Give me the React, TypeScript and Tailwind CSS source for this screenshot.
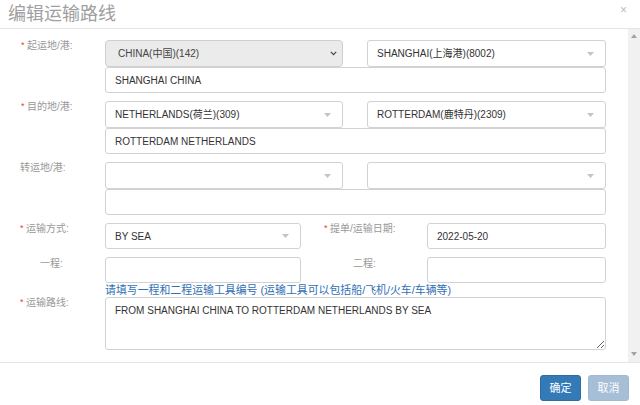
import React from "react";

function Label({ text, required, pl, w = "w-[105px]" }: { text: string; required?: boolean; pl: string; w?: string }) {
  return (
    <div className={`${w} shrink-0 ${pl} text-[10px] leading-[12px] text-[#999] whitespace-nowrap`}>
      {required ? <span className="inline-block w-[6px] text-[#e5403a] text-[9px] align-top leading-[10px]">*</span> : null}
      {text}
    </div>
  );
}

function Tri({ color = "#c4c4c4" }: { color?: string }) {
  return (
    <svg width="7" height="4" viewBox="0 0 7 4">
      <path d="M0 0 L7 0 L3.5 4 Z" fill={color} />
    </svg>
  );
}

function Select2({ value, w }: { value?: string; w: string }) {
  return (
    <div className={`${w} h-[27px] border border-[#d2d2d2] rounded-[3px] bg-white flex items-center justify-between pl-[9px] pr-[11px] text-[10px] text-[#333]`}>
      <span className="whitespace-nowrap">{value ?? ""}</span>
      <Tri />
    </div>
  );
}

function Input({ value, w, h = "h-[26px]" }: { value?: string; w: string; h?: string }) {
  return (
    <div className={`${w} ${h} border border-[#d2d2d2] rounded-[3px] bg-white flex items-center pl-[9px] text-[10px] text-[#333] whitespace-nowrap`}>
      {value ?? ""}
    </div>
  );
}

export default function App() {
  return (
    <div className="w-[640px] h-[405px] bg-white flex flex-col overflow-hidden font-['Liberation_Sans','Noto_Sans_CJK_SC',sans-serif]">
      {/* header */}
      <div className="h-[29px] shrink-0 border-b border-[#e5e5e5] flex items-start justify-between">
        <div className="pl-[8px] pt-[3px] text-[18px] leading-[22px] text-[#a0a0a0]">编辑运输路线</div>
        <div className="pr-[13px] pt-[2px] text-[12px] leading-[16px] text-[#bdbdbd]">×</div>
      </div>

      {/* body */}
      <div className="h-[334px] shrink-0 border-b border-[#e5e5e5] flex">
        <div className="w-[628px] pt-[11px] flex flex-col">
          {/* row 1 */}
          <div className="flex">
            <Label text="起运地/港:" required pl="pl-[21px]" />
            <div className="w-[501px] flex flex-col">
              <div className="flex gap-[24px]">
                <div className="w-[238px] h-[27px] border border-[#cfcfcf] rounded-[4px] bg-[#ebebeb] flex items-center justify-between pl-[12px] pr-[5px] text-[10px] text-[#444]">
                  <span>CHINA(中国)(142)</span>
                  <svg width="7" height="5" viewBox="0 0 7 5">
                    <path d="M0.8 0.8 L3.5 3.6 L6.2 0.8" stroke="#444" strokeWidth="1.2" fill="none" />
                  </svg>
                </div>
                <Select2 w="w-[239px]" value="SHANGHAI(上海港)(8002)" />
              </div>
              <Input w="w-[501px]" value="SHANGHAI CHINA" />
            </div>
          </div>

          {/* row 2 */}
          <div className="flex mt-[8px]">
            <Label text="目的地/港:" required pl="pl-[21px]" />
            <div className="w-[501px] flex flex-col">
              <div className="flex gap-[24px]">
                <Select2 w="w-[238px]" value="NETHERLANDS(荷兰)(309)" />
                <Select2 w="w-[239px]" value="ROTTERDAM(鹿特丹)(2309)" />
              </div>
              <Input w="w-[501px]" value="ROTTERDAM NETHERLANDS" />
            </div>
          </div>

          {/* row 3 */}
          <div className="flex mt-[8px]">
            <Label text="转运地/港:" pl="pl-[20px]" />
            <div className="w-[501px] flex flex-col">
              <div className="flex gap-[24px]">
                <Select2 w="w-[238px]" />
                <Select2 w="w-[239px]" />
              </div>
              <Input w="w-[501px]" />
            </div>
          </div>

          {/* row 4 */}
          <div className="flex mt-[8px]">
            <Label text="运输方式:" required pl="pl-[20px]" />
            <div className="w-[196px] h-[26px] border border-[#d2d2d2] rounded-[3px] bg-white flex items-center justify-between pl-[9px] pr-[11px] text-[10px] text-[#333]">
              <span>BY SEA</span>
              <Tri />
            </div>
            <Label text="提单/运输日期:" required pl="pl-[23px]" w="w-[126px]" />
            <Input w="w-[179px]" value="2022-05-20" />
          </div>

          {/* row 5 */}
          <div className="flex mt-[8px]">
            <div className="w-[105px] shrink-0 pl-[40px] pt-[1px] text-[10px] leading-[12px] text-[#999]">一程:</div>
            <Input w="w-[196px]" />
            <div className="w-[126px] shrink-0 pl-[52px] pt-[1px] text-[10px] leading-[12px] text-[#999]">二程:</div>
            <Input w="w-[179px]" />
          </div>
          <div className="pl-[105px] h-[14px] text-[10.9px] leading-[14px] text-[#2f6fb5] whitespace-nowrap">
            请填写一程和二程运输工具编号 (运输工具可以包括船/飞机/火车/车辆等)
          </div>

          {/* row 6 */}
          <div className="flex">
            <Label text="运输路线:" required pl="pl-[20px]" />
            <textarea
              readOnly
              defaultValue="FROM SHANGHAI CHINA TO ROTTERDAM NETHERLANDS BY SEA"
              className="w-[501px] h-[53px] border border-[#d2d2d2] rounded-[3px] bg-white px-[9px] pt-[6px] text-[10px] leading-[13px] text-[#333] outline-none font-['Liberation_Sans','Noto_Sans_CJK_SC',sans-serif]"
            />
          </div>
        </div>

        {/* scrollbar */}
        <div className="w-[12px] bg-[#f1f1f1] flex flex-col justify-between items-center pt-[5px] pb-[6px]">
          <svg width="6" height="4" viewBox="0 0 6 4">
            <path d="M0 4 L6 4 L3 0 Z" fill="#a3a3a3" />
          </svg>
          <svg width="6" height="4" viewBox="0 0 6 4">
            <path d="M0 0 L6 0 L3 4 Z" fill="#a3a3a3" />
          </svg>
        </div>
      </div>

      {/* footer */}
      <div className="flex-1 flex justify-end items-start pt-[12px] pr-[11px] gap-[7px]">
        <div className="w-[41px] h-[26px] rounded-[3px] bg-[#337ab7] border border-[#2e6da4] text-white text-[11px] flex items-center justify-center">
          确定
        </div>
        <div className="w-[41px] h-[26px] rounded-[3px] bg-[#a6bed6] border border-[#a0b9d2] text-white text-[11px] flex items-center justify-center">
          取消
        </div>
      </div>
    </div>
  );
}
